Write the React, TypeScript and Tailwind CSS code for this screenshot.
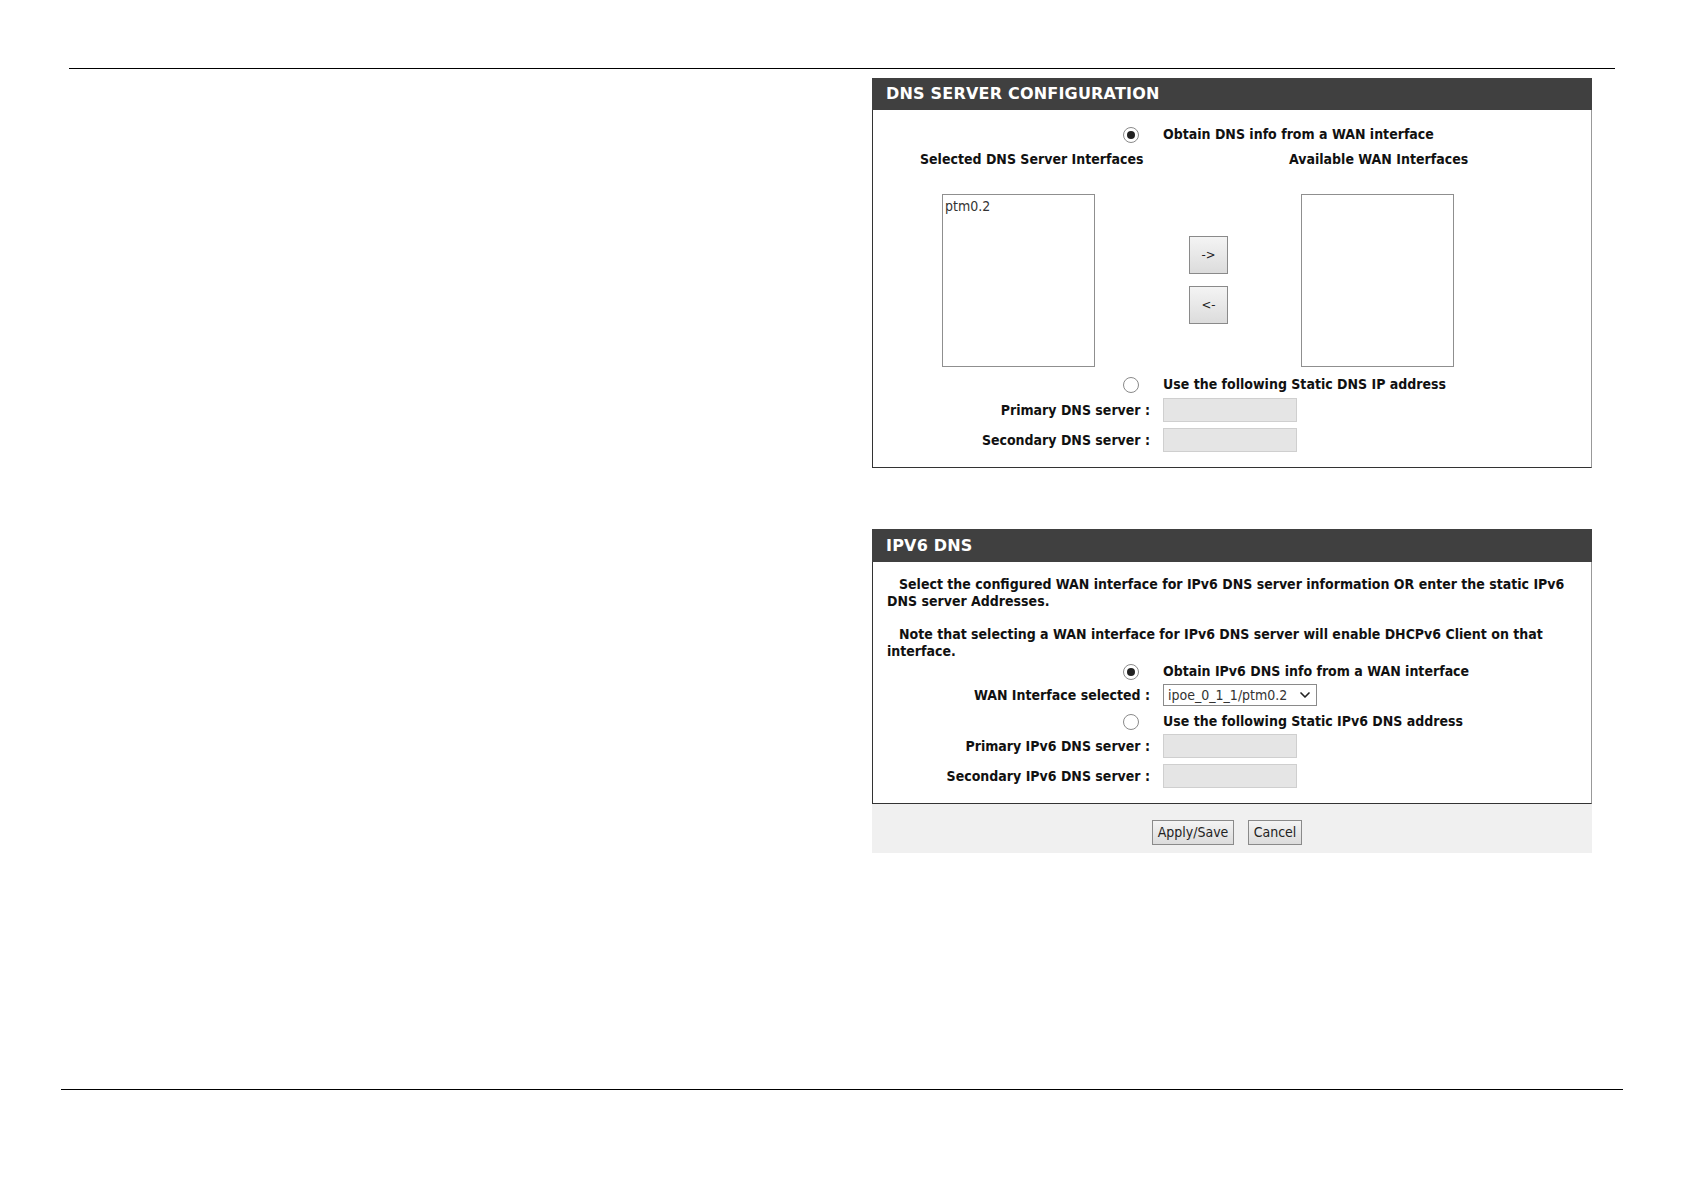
import { ChevronDown } from 'lucide-react'

const body = "font-['DejaVu_Sans_Condensed','DejaVu_Sans',Tahoma,sans-serif]"

function Radio({ checked }: { checked?: boolean }) {
    return (
        <div className="w-[16px] h-[16px] rounded-full border border-[#8a8a8a] bg-white flex items-center justify-center">
            {checked && <div className="w-[8px] h-[8px] rounded-full bg-[#222]" />}
        </div>
    )
}

function Field() {
    return <div className="w-[134px] h-[24px] bg-[#e5e5e5] border border-[#cfcfcf]" />
}

function Btn({ label, className = '' }: { label: string; className?: string }) {
    return (
        <div
            className={`flex items-center justify-center border border-[#8a8a8a] bg-gradient-to-b from-[#f4f4f4] to-[#dcdcdc] text-[#222] ${className}`}
        >
            {label}
        </div>
    )
}

function Row({ label, children, className = '' }: { label?: React.ReactNode; children: React.ReactNode; className?: string }) {
    return (
        <div className={`grid grid-cols-[277px_1fr] gap-x-[13px] items-center ${className}`}>
            <div className="flex justify-end items-center text-right">{label}</div>
            <div className="flex items-center">{children}</div>
        </div>
    )
}

function PanelHeader({ title, h }: { title: string; h: string }) {
    return (
        <div className={`bg-[#404040] ${h} flex items-center pl-[14px]`}>
            <span className="font-['DejaVu_Sans',Verdana,sans-serif] font-bold text-[16px] text-white tracking-[0.2px]">
                {title}
            </span>
        </div>
    )
}

export default function App() {
    return (
        <div className={`w-[1684px] h-[1191px] bg-white flex flex-col text-[#111] ${body}`}>
            <div className="ml-[69px] w-[1546px] mt-[68px] h-[1px] bg-black" />

            <div className="ml-[872px] w-[720px] mt-[9px] font-bold text-[14px]">
                {/* DNS server configuration */}
                <section>
                    <PanelHeader title="DNS SERVER CONFIGURATION" h="h-[32px]" />
                    <div className="border-l border-b border-l-[#333] border-b-[#333] border-r border-r-[#999] pt-[14px] pb-[15px]">
                        <Row label={<div className="pr-[11px]"><Radio checked /></div>} className="h-[20px]">
                            <span>Obtain DNS info from a WAN interface</span>
                        </Row>
                        <div className="flex mt-[6px] h-[18px] items-center">
                            <span className="ml-[47px] w-[369px]">Selected DNS Server Interfaces</span>
                            <span>Available WAN Interfaces</span>
                        </div>
                        <div className="flex mt-[26px] h-[173px]">
                            <div className="ml-[69px] w-[153px] h-full border border-[#8f8f8f] bg-white px-[2px] pt-[1px] font-normal text-[14px] text-[#333]">
                                ptm0.2
                            </div>
                            <div className="ml-[94px] w-[39px] flex flex-col pt-[42px] gap-[12px] font-normal text-[13px]">
                                <Btn label="->" className="h-[38px] w-[39px]" />
                                <Btn label="<-" className="h-[38px] w-[39px]" />
                            </div>
                            <div className="ml-[73px] w-[153px] h-full border border-[#8f8f8f] bg-white" />
                        </div>
                        <Row label={<div className="pr-[11px]"><Radio /></div>} className="h-[20px] mt-[7px]">
                            <span>Use the following Static DNS IP address</span>
                        </Row>
                        <Row label="Primary DNS server :" className="mt-[4px]">
                            <Field />
                        </Row>
                        <Row label="Secondary DNS server :" className="mt-[6px]">
                            <Field />
                        </Row>
                    </div>
                </section>

                {/* IPv6 DNS */}
                <section className="mt-[61px]">
                    <PanelHeader title="IPV6 DNS" h="h-[33px]" />
                    <div className="border-l border-b border-l-[#333] border-b-[#333] border-r border-r-[#999] pt-[14px] pb-[15px]">
                        <p className="px-[14px] leading-[17px] indent-[12px]">
                            Select the configured WAN interface for IPv6 DNS server information OR enter the static IPv6 DNS server Addresses.
                        </p>
                        <p className="px-[14px] leading-[17px] indent-[12px] mt-[16px] pr-[40px]">
                            Note that selecting a WAN interface for IPv6 DNS server will enable DHCPv6 Client on that interface.
                        </p>
                        <Row label={<div className="pr-[11px]"><Radio checked /></div>} className="h-[20px] mt-[1px]">
                            <span>Obtain IPv6 DNS info from a WAN interface</span>
                        </Row>
                        <Row label="WAN Interface selected :" className="mt-[3px]">
                            <div className="w-[154px] h-[22px] border border-[#8a8a8a] bg-white flex items-center justify-between pl-[4px] pr-[3px] font-normal text-[14px] text-[#333]">
                                <span>ipoe_0_1_1/ptm0.2</span>
                                <ChevronDown size={16} strokeWidth={2.5} className="text-[#222]" />
                            </div>
                        </Row>
                        <Row label={<div className="pr-[11px]"><Radio /></div>} className="h-[20px] mt-[5px]">
                            <span>Use the following Static IPv6 DNS address</span>
                        </Row>
                        <Row label="Primary IPv6 DNS server :" className="mt-[3px]">
                            <Field />
                        </Row>
                        <Row label="Secondary IPv6 DNS server :" className="mt-[6px]">
                            <Field />
                        </Row>
                    </div>
                    <div className="h-[49px] bg-[#f0f0f0] flex items-center justify-center gap-[14px] pr-[10px] pt-[8px] font-normal text-[14px]">
                        <Btn label="Apply/Save" className="w-[82px] h-[25px]" />
                        <Btn label="Cancel" className="w-[54px] h-[25px]" />
                    </div>
                </section>
            </div>

            <div className="ml-[61px] w-[1562px] mt-auto mb-[101px] h-[1px] bg-black" />
        </div>
    )
}
